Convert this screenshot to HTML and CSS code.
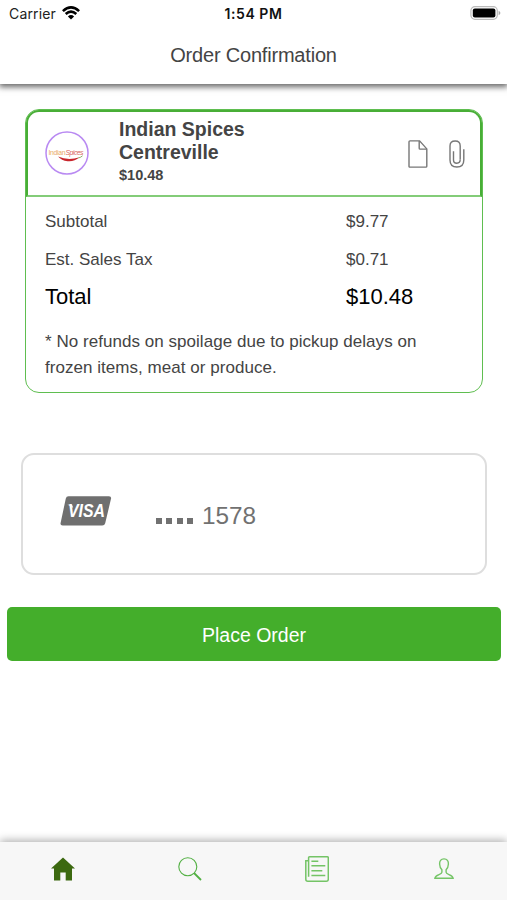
FILE: index.html
```html
<!DOCTYPE html>
<html lang="en">
<head>
  <meta charset="UTF-8">
  <title>Order Confirmation</title>
  <meta name="viewport" content="width=device-width, initial-scale=1.0">
  <link rel="stylesheet" href="styles.css">
</head>
<body>
  <header class="header">
    <div class="status">
      <div class="carrier">
        <span>Carrier</span>
        <svg class="wifi" width="18" height="14" viewBox="0 0 18 14" fill="none" stroke="#000" stroke-width="2.6">
          <path d="M0.9 5.1Q9 -2.3 17.1 5.1"/>
          <path d="M3.7 8Q9 3.2 14.3 8"/>
          <path d="M9 13.6L5.9 10.4Q9 7.8 12.1 10.4Z" fill="#000" stroke="none"/>
        </svg>
      </div>
      <span class="time">1:54 PM</span>
      <svg class="battery" width="31" height="14" viewBox="0 0 31 14">
        <rect x="0.9" y="0.7" width="26.4" height="12.6" rx="4" fill="#fff" stroke="#bbb" stroke-width="1.2"/>
        <rect x="2.8" y="2.4" width="22.6" height="9.2" rx="2" fill="#000"/>
        <path d="M28.6 4.8Q30.4 5.6 30.4 7Q30.4 8.4 28.6 9.2Z" fill="#aaa"/>
      </svg>
    </div>
    <h1 class="title">Order Confirmation</h1>
  </header>

  <main class="content">
    <section class="order">
      <div class="order-head">
        <svg class="logo" width="44" height="44" viewBox="0 0 44 44">
          <circle cx="22" cy="22" r="21" fill="#fff" stroke="#b98af2" stroke-width="1.5"/>
          <text x="3.5" y="24.2" font-size="6.8" textLength="17" fill="#e9a967">Indian</text>
          <text x="20.5" y="24.2" font-size="6.8" font-style="italic" textLength="18" fill="#d9655c">Spices</text>
          <path d="M13 25.5Q23 30 34.5 26.3Q29 31 22.5 30.2Q16.5 29.5 13 25.5Z" fill="#c8252c"/>
          <path d="M33.5 27Q36 26.3 37.5 24.8" fill="none" stroke="#6f9a3c" stroke-width="0.8"/>
        </svg>
        <div class="store">
          <h2 class="store-name">Indian Spices Centreville</h2>
          <div class="store-total">$10.48</div>
        </div>
        <div class="actions">
          <svg width="20" height="28" viewBox="0 0 20 28" fill="none" stroke="#777" stroke-width="1.4">
            <path d="M1 1.8Q1 0.9 2 0.9H11.6L18.8 8.9V26.2Q18.8 27.1 17.8 27.1H2Q1 27.1 1 26.2Z"/>
            <path d="M11.2 1V8.2Q11.2 9.1 12.1 9.1H18.8"/>
          </svg>
          <svg width="16" height="28" viewBox="0 0 16 28" fill="none" stroke="#777" stroke-width="1.4">
            <path d="M11.2 19.5V6Q11.2 1 6.2 1Q1 1 1 6V20Q1 27 7.9 27Q14.8 27 14.8 20V9.3"/>
            <path d="M4.5 11.2V20Q4.5 23.2 7.8 23.2Q11.2 23.2 11.2 19.5"/>
          </svg>
        </div>
      </div>
      <div class="order-body">
        <div class="line"><span>Subtotal</span><span>$9.77</span></div>
        <div class="line"><span>Est. Sales Tax</span><span>$0.71</span></div>
        <div class="line line-total"><span>Total</span><span>$10.48</span></div>
        <p class="note">* No refunds on spoilage due to pickup delays on frozen items, meat or produce.</p>
      </div>
    </section>

    <section class="payment">
      <svg class="card-brand" width="52" height="30" viewBox="0 0 52 30">
        <path d="M8.5 0.3H49Q51.6 0.3 51 2.8L45.2 27.2Q44.6 29.5 42.2 29.5H2.6Q0 29.5 0.6 27L5.8 2.6Q6.3 0.3 8.5 0.3Z" fill="#6f6f6f"/>
        <text class="visa" x="8" y="21.3" textLength="37" lengthAdjust="spacingAndGlyphs">VISA</text>
        <path d="M7.4 8.7H12L13.2 12Q11 9.7 7.4 8.7Z" fill="#fff"/>
      </svg>
      <div class="card-number">
        <span class="dots"><i></i><i></i><i></i><i></i></span>
        <span>1578</span>
      </div>
    </section>

    <button class="place-order">Place Order</button>
  </main>

  <nav class="tabs">
    <a class="tab">
      <svg width="24" height="24" viewBox="0 0 24 24" fill="#3c6910">
        <path d="M12 0.6L24 11.6H21V23.4H14.7V15.4H9.3V23.4H3V11.6H0Z"/>
      </svg>
    </a>
    <a class="tab">
      <svg width="24" height="24" viewBox="0 0 24 24" fill="none" stroke="#52b043">
        <circle cx="9.8" cy="9.8" r="9" stroke-width="1.1"/>
        <path d="M16 16L23 23" stroke-width="1.8"/>
      </svg>
    </a>
    <a class="tab">
      <svg width="24" height="26" viewBox="0 0 24 26" fill="none" stroke="#74c466" stroke-width="1.5">
        <path d="M3.6 20.8V1.8Q3.6 0.8 4.6 0.8H22.3Q23.3 0.8 23.3 1.8V23.2Q23.3 25.2 21.3 25.2H2.8Q0.8 25.2 0.8 23.2V4.8H3.6"/>
        <path d="M6.4 5.3H13.3M6.4 9.8H20.3M6.4 14.8H17.3M6.4 19.6H20.3"/>
      </svg>
    </a>
    <a class="tab">
      <svg width="20" height="21" viewBox="0 0 20 21" fill="none" stroke="#74c466" stroke-width="1.4">
        <path d="M10 0.9C6.8 0.9 5.5 3 5.6 6C5.7 8.5 6.4 10.3 7.9 11.8V14.3C7.9 17 1.5 16.2 0.9 20.2H19.1C18.5 16.2 12.1 17 12.1 14.3V11.8C13.6 10.3 14.3 8.5 14.4 6C14.5 3 13.2 0.9 10 0.9Z"/>
      </svg>
    </a>
  </nav>
</body>
</html>
```
FILE: styles.css
```css
* {
  box-sizing: border-box;
}
body {
  margin: 0;
  height: 100vh;
  display: flex;
  flex-direction: column;
  background: #fff;
  color: #444;
  font-family: "Liberation Sans", Arial, sans-serif;
  overflow: hidden;
}
.header {
  height: 84px;
  background: #fff;
  box-shadow: 0 2px 6px 1px rgba(0,0,0,0.6);
}
.status {
  display: grid;
  grid-template-columns: 1fr auto 1fr;
  align-items: center;
  height: 27px;
  padding: 0 6px 0 9px;
  font-family: Inter, sans-serif;
  font-size: 14px;
  color: #222;
}
.carrier {
  display: flex;
  align-items: center;
  gap: 6px;
  letter-spacing: 0.15px;
}
.wifi {
  margin-top: -2px;
}
.time {
  margin-left: -3px;
  font-weight: 600;
  letter-spacing: 0.55px;
  color: #111;
}
.battery {
  justify-self: end;
  margin-top: -1px;
}
.title {
  margin: 17px 0 0;
  text-align: center;
  font-size: 20px;
  line-height: 23px;
  letter-spacing: -0.2px;
  font-weight: 400;
}
.content {
  flex: 1;
  display: flex;
  flex-direction: column;
  padding: 25px 6px 0 7px;
}
.order {
  height: 284px;
  margin: 0 18px;
  border: 1px solid #5fbe50;
  border-radius: 14px;
}
.order-head {
  display: flex;
  align-items: center;
  height: 87px;
  padding: 0 15px 0 17px;
  border: 2px solid #48ae36;
  border-bottom-color: #83cc78;
  border-radius: 13px 13px 0 0;
}
.logo {
  margin-bottom: 2px;
}
.store {
  width: 170px;
  margin: 0 0 5px 30px;
}
.store-name {
  margin: 0;
  font-size: 19.5px;
  line-height: 23.5px;
}
.store-total {
  font-size: 14.5px;
  line-height: 20px;
  font-weight: 700;
}
.actions {
  display: flex;
  gap: 21px;
  margin-left: auto;
}
.order-body {
  padding: 6px 19px 0;
  font-size: 17px;
}
.line {
  display: grid;
  grid-template-columns: 301px 1fr;
  line-height: 38px;
}
.line-total {
  font-size: 22px;
  line-height: 36px;
  color: #000;
}
.note {
  margin: 14px 0 0;
  line-height: 25.5px;
  letter-spacing: 0.04px;
}
.payment {
  display: flex;
  align-items: center;
  height: 122px;
  margin: 60px 14px 0 14px;
  padding: 0 37px;
  border: 2px solid #dedede;
  border-radius: 13px;
}
.card-brand {
  margin-bottom: 7px;
}
.visa {
  font-size: 18px;
  font-weight: 700;
  font-style: italic;
  fill: #fff;
}
.card-number {
  display: flex;
  align-items: baseline;
  gap: 9px;
  margin: 4px 0 0 44px;
  font-size: 24.3px;
  color: #717171;
}
.dots {
  display: flex;
  gap: 4.3px;
}
.dots i {
  width: 6px;
  height: 6px;
  background: #717171;
}
.place-order {
  height: 54px;
  margin-top: 32px;
  padding-top: 3px;
  border: 0;
  border-radius: 5px;
  background: #44ae2b;
  color: #fff;
  font-family: inherit;
  font-size: 19.5px;
}
.tabs {
  display: flex;
  height: 58px;
  background: #f7f7f7;
  box-shadow: 0 -2px 8px rgba(0,0,0,0.3);
}
.tab {
  flex: 1;
  display: flex;
  justify-content: center;
  align-items: center;
  padding-bottom: 5px;
}
```
